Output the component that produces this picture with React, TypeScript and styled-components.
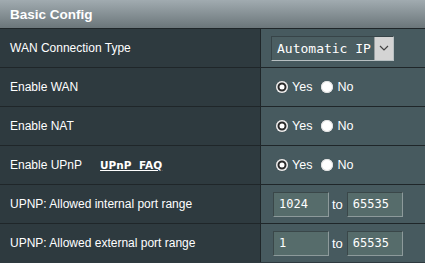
import React from "react";
import styled, { createGlobalStyle } from "styled-components";

const Global = createGlobalStyle`
  html, body { margin: 0; padding: 0; background: #2e3a3f; }
  body { font-family: Arial, "Liberation Sans", sans-serif; }
`;

const Table = styled.div`
  width: 425px;
  display: grid;
  grid-template-columns: 261px 1fr;
  background: #1f2629;
  row-gap: 1px;
`;

const Header = styled.div`
  grid-column: 1 / span 2;
  height: 28px;
  display: flex;
  align-items: center;
  padding-left: 10px;
  background: linear-gradient(#a1abb0, #6b767a);
  color: #fff;
  font: bold 13.5px "Liberation Sans", Arial, sans-serif;
`;

const Label = styled.div`
  height: 38px;
  background: #2e3a3f;
  border-right: 1px solid #1f2629;
  display: flex;
  align-items: center;
  padding-left: 10px;
  color: #fff;
  font: 12px "Liberation Sans", Arial, sans-serif;
`;

const Cell = styled.div`
  height: 38px;
  background: #475a5f;
  display: flex;
  align-items: center;
  padding-left: 10px;
  color: #fff;
  font: 12px "Liberation Sans", Arial, sans-serif;
`;

const FaqLink = styled.a`
  margin-left: 18px;
  color: #fff;
  font: bold 10.5px "DejaVu Sans", sans-serif;
  text-decoration: underline;
  word-spacing: 4px;
`;

const SelectBox = styled.div`
  display: flex;
  align-items: stretch;
  height: 25px;
  width: 123px;
  box-sizing: border-box;
  border-top: 1px solid #374448;
  border-left: 1px solid #374448;
  border-bottom: 1px solid #b8c0c2;
  border-right: 1px solid #b8c0c2;
  background: #4b5e62;
`;

const SelectText = styled.div`
  flex: 1;
  display: flex;
  align-items: center;
  padding-left: 5px;
  color: #fff;
  font: 13px "DejaVu Sans Mono", monospace;
`;

const SelectArrow = styled.div`
  width: 18px;
  background: #d4d4d4;
  border-left: 1px solid #9aa0a2;
  display: flex;
  align-items: center;
  justify-content: center;
`;

const RadioGroup = styled.label`
  display: inline-flex;
  align-items: center;
  margin-right: 9px;
  color: #fff;
  font: 12.5px "Liberation Sans", Arial, sans-serif;
  &:first-child {
    margin-left: 5px;
  }
`;

const RadioDot = styled.span<{ $on?: boolean }>`
  width: 12px;
  height: 12px;
  border-radius: 50%;
  background: #fff;
  margin-right: 4px;
  box-shadow: ${(p) =>
    p.$on ? "inset 0 0 0 1.5px #f2f2f2, inset 0 0 0 3.5px #2a2a2a" : "inset 0 0 0 1px #e0e0e0"};
`;

const PortInput = styled.div`
  width: 56px;
  height: 25px;
  box-sizing: border-box;
  display: flex;
  align-items: center;
  padding-left: 5px;
  background: #566c6b;
  border-top: 1px solid #3a4749;
  border-left: 1px solid #3a4749;
  border-bottom: 1px solid #8d9a9b;
  border-right: 1px solid #8d9a9b;
  color: #fff;
  font: 12px "DejaVu Sans Mono", monospace;
  &:first-child {
    margin-left: 2px;
  }
`;

const To = styled.span`
  margin: 0 4px 0 3px;
  color: #fff;
  font-size: 13px;
`;

const Radios = ({ on }: { on: boolean }) => (
  <>
    <RadioGroup>
      <RadioDot $on={on} />
      Yes
    </RadioGroup>
    <RadioGroup>
      <RadioDot $on={!on} />
      No
    </RadioGroup>
  </>
);

const Range = ({ from, to }: { from: string; to: string }) => (
  <>
    <PortInput>{from}</PortInput>
    <To>to</To>
    <PortInput>{to}</PortInput>
  </>
);

export default function App() {
  return (
    <>
      <Global />
      <Table>
        <Header>Basic Config</Header>
        <Label>WAN Connection Type</Label>
        <Cell>
          <SelectBox>
            <SelectText>Automatic IP</SelectText>
            <SelectArrow>
              <svg width="10" height="6" viewBox="0 0 10 6">
                <path d="M1 1 L5 5 L9 1" fill="none" stroke="#444" strokeWidth="1.2" />
              </svg>
            </SelectArrow>
          </SelectBox>
        </Cell>
        <Label>Enable WAN</Label>
        <Cell>
          <Radios on={true} />
        </Cell>
        <Label>Enable NAT</Label>
        <Cell>
          <Radios on={true} />
        </Cell>
        <Label>
          Enable UPnP<FaqLink href="#">UPnP FAQ</FaqLink>
        </Label>
        <Cell>
          <Radios on={true} />
        </Cell>
        <Label>UPNP: Allowed internal port range</Label>
        <Cell>
          <Range from="1024" to="65535" />
        </Cell>
        <Label>UPNP: Allowed external port range</Label>
        <Cell>
          <Range from="1" to="65535" />
        </Cell>
      </Table>
    </>
  );
}
